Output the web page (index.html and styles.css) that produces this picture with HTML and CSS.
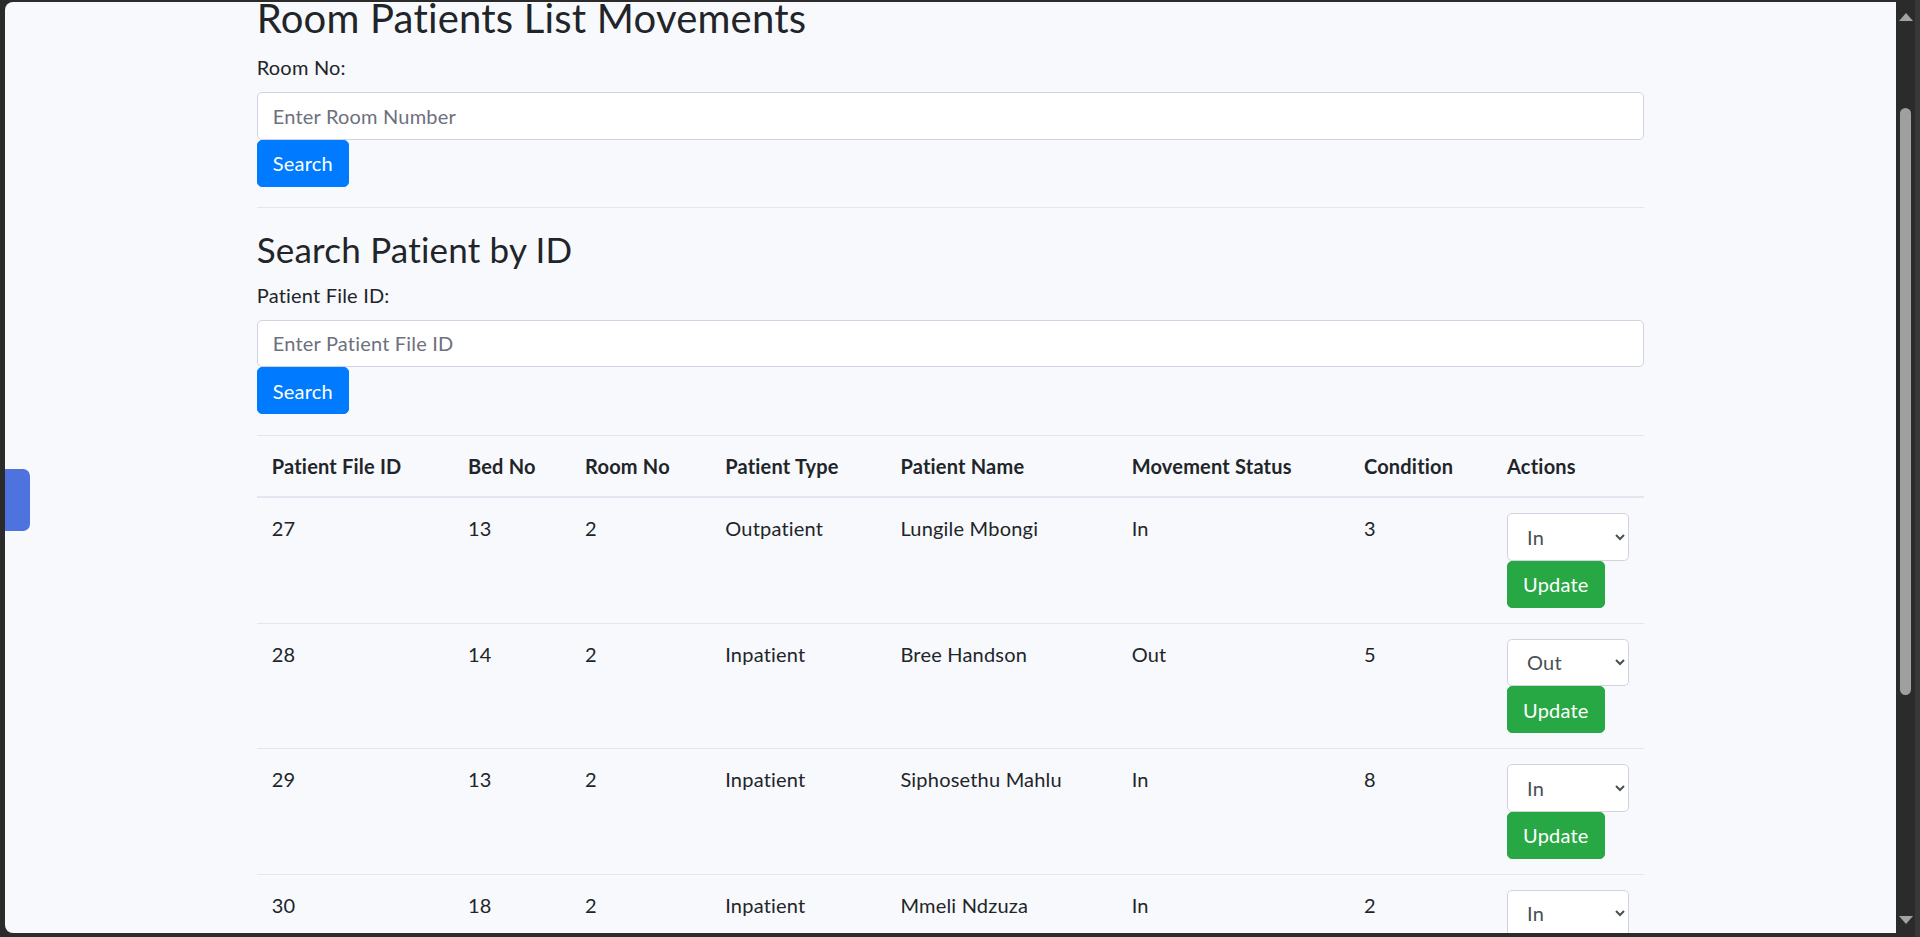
FILE: index.html
```html
<!DOCTYPE html>
<html lang="en">
<head>
<meta charset="utf-8">
<title>Room Patients List Movements</title>
<link rel="stylesheet" href="styles.css">
</head>
<body>
<div class="window">
  <div class="frame-left"></div>
  <div class="viewport">
    <button class="sidebar-tab" aria-label="Toggle sidebar"></button>
    <div class="container">
      <h2 class="title">Room Patients List Movements</h2>
      <form class="search-form">
        <label class="form-label" for="room">Room No:</label>
        <input class="form-control" id="room" type="text" placeholder="Enter Room Number">
        <button class="btn btn-primary" type="button">Search</button>
      </form>
      <hr class="divider">
      <h3 class="subtitle">Search Patient by ID</h3>
      <form class="search-form">
        <label class="form-label" for="pid">Patient File ID:</label>
        <input class="form-control" id="pid" type="text" placeholder="Enter Patient File ID">
        <button class="btn btn-primary" type="button">Search</button>
      </form>
      <table class="table">
        <colgroup>
          <col class="c1"><col class="c2"><col class="c3"><col class="c4"><col class="c5"><col class="c6"><col class="c7"><col class="c8">
        </colgroup>
        <thead>
          <tr>
            <th>Patient File ID</th><th>Bed No</th><th>Room No</th><th>Patient Type</th><th>Patient Name</th><th>Movement Status</th><th>Condition</th><th>Actions</th>
          </tr>
        </thead>
        <tbody>
          <tr>
            <td>27</td><td>13</td><td>2</td><td>Outpatient</td><td>Lungile Mbongi</td><td>In</td><td>3</td>
            <td><select class="form-control select"><option selected>In</option><option>Out</option></select><button class="btn btn-success" type="button">Update</button></td>
          </tr>
          <tr>
            <td>28</td><td>14</td><td>2</td><td>Inpatient</td><td>Bree Handson</td><td>Out</td><td>5</td>
            <td><select class="form-control select"><option>In</option><option selected>Out</option></select><button class="btn btn-success" type="button">Update</button></td>
          </tr>
          <tr>
            <td>29</td><td>13</td><td>2</td><td>Inpatient</td><td>Siphosethu Mahlu</td><td>In</td><td>8</td>
            <td><select class="form-control select"><option selected>In</option><option>Out</option></select><button class="btn btn-success" type="button">Update</button></td>
          </tr>
          <tr>
            <td>30</td><td>18</td><td>2</td><td>Inpatient</td><td>Mmeli Ndzuza</td><td>In</td><td>2</td>
            <td><select class="form-control select"><option selected>In</option><option>Out</option></select><button class="btn btn-success" type="button">Update</button></td>
          </tr>
        </tbody>
      </table>
    </div>
  </div>
  <div class="scrollbar">
    <svg class="arrow arrow-up" width="14" height="8" viewBox="0 0 14 8"><polygon points="7,0 14,8 0,8" fill="#a3a3a3"/></svg>
    <div class="track"><div class="thumb"></div></div>
    <svg class="arrow arrow-down" width="14" height="8" viewBox="0 0 14 8"><polygon points="0,0 14,0 7,8" fill="#a3a3a3"/></svg>
  </div>
  <div class="frame-right"></div>
</div>
</body>
</html>
```

FILE: styles.css
```css
* { box-sizing: border-box; }

html, body {
  margin: 0;
  padding: 0;
  height: 100%;
  overflow: hidden;
}

body {
  background: #2b2b2b;
  font-family: "Lato", "Open Sans", sans-serif;
  font-size: 20px;
  line-height: 1.5;
  letter-spacing: 0.01em;
  color: #212529;
}

.window {
  display: flex;
  height: 937px;
}

.frame-left {
  width: 5px;
  flex: none;
  background: #2b2b2b;
}

.viewport {
  flex: 1;
  position: relative;
  margin: 2px 0 4px 0;
  background: #f8f9fc;
  border-top-left-radius: 8px;
  border-bottom-left-radius: 8px;
  overflow: hidden;
}

.sidebar-tab {
  position: absolute;
  left: 0;
  top: 467px;
  width: 25px;
  height: 62px;
  padding: 0;
  border: none;
  background: #4e73df;
  border-radius: 0 7px 7px 0;
}

.scrollbar {
  width: 19px;
  flex: none;
  background: #2b2b2b;
  display: flex;
  flex-direction: column;
  align-items: center;
  padding: 13px 0 13px 0;
}

.arrow { display: block; flex: none; }

.track {
  flex: 1;
  width: 100%;
  display: flex;
  justify-content: center;
  padding-top: 87px;
}

.thumb {
  width: 11px;
  height: 587px;
  background: #9f9f9f;
  border-radius: 6px;
}

.frame-right {
  width: 5px;
  flex: none;
  background: #383838;
}

.container {
  width: 1425px;
  margin: -8px auto 0 auto;
  padding: 0 18.75px;
}

.title {
  font-size: 40px;
  font-weight: 400;
  line-height: 1.2;
  margin: 0 0 10px 0;
}

.subtitle {
  font-size: 35px;
  font-weight: 400;
  line-height: 1.2;
  margin: 0 0 10px 0;
}

.search-form { margin: 0; }

.form-label {
  display: block;
  margin-bottom: 10px;
}

.form-control {
  display: block;
  width: 100%;
  height: 47.5px;
  padding: 7.5px 15px;
  font-family: inherit;
  font-size: 20px;
  line-height: 1.5;
  letter-spacing: 0.01em;
  color: #495057;
  background: #fff;
  border: 1px solid #d1d3e2;
  border-radius: 5px;
  margin: 0;
}

.form-control::placeholder { color: #6e707e; }

.select {
  color: #495057;
  padding-left: 15px;
}

.btn {
  display: inline-block;
  font-family: inherit;
  font-size: 20px;
  line-height: 1.5;
  letter-spacing: 0.01em;
  padding: 7.5px 15px;
  border: 1px solid transparent;
  border-radius: 5px;
  color: #fff;
  margin: 0;
  vertical-align: top;
}

.btn-primary { background: #007bff; border-color: #007bff; }
.btn-success { background: #28a745; border-color: #28a745; }

.divider {
  margin: 20px 0;
  border: 0;
  border-top: 1px solid #e3e6f0;
}

.table {
  width: 100%;
  margin-top: 21px;
  border-collapse: collapse;
  table-layout: fixed;
}

.c1 { width: 196px; }
.c2 { width: 117px; }
.c3 { width: 140px; }
.c4 { width: 175px; }
.c5 { width: 231px; }
.c6 { width: 232px; }
.c7 { width: 143px; }
.c8 { width: 152px; }

.table th,
.table td {
  padding: 15px;
  text-align: left;
  vertical-align: top;
  border-top: 1px solid #e3e6f0;
  color: #212529;
}

.table thead th {
  vertical-align: bottom;
  font-weight: 700;
  border-bottom: 2px solid #e3e6f0;
}
```
